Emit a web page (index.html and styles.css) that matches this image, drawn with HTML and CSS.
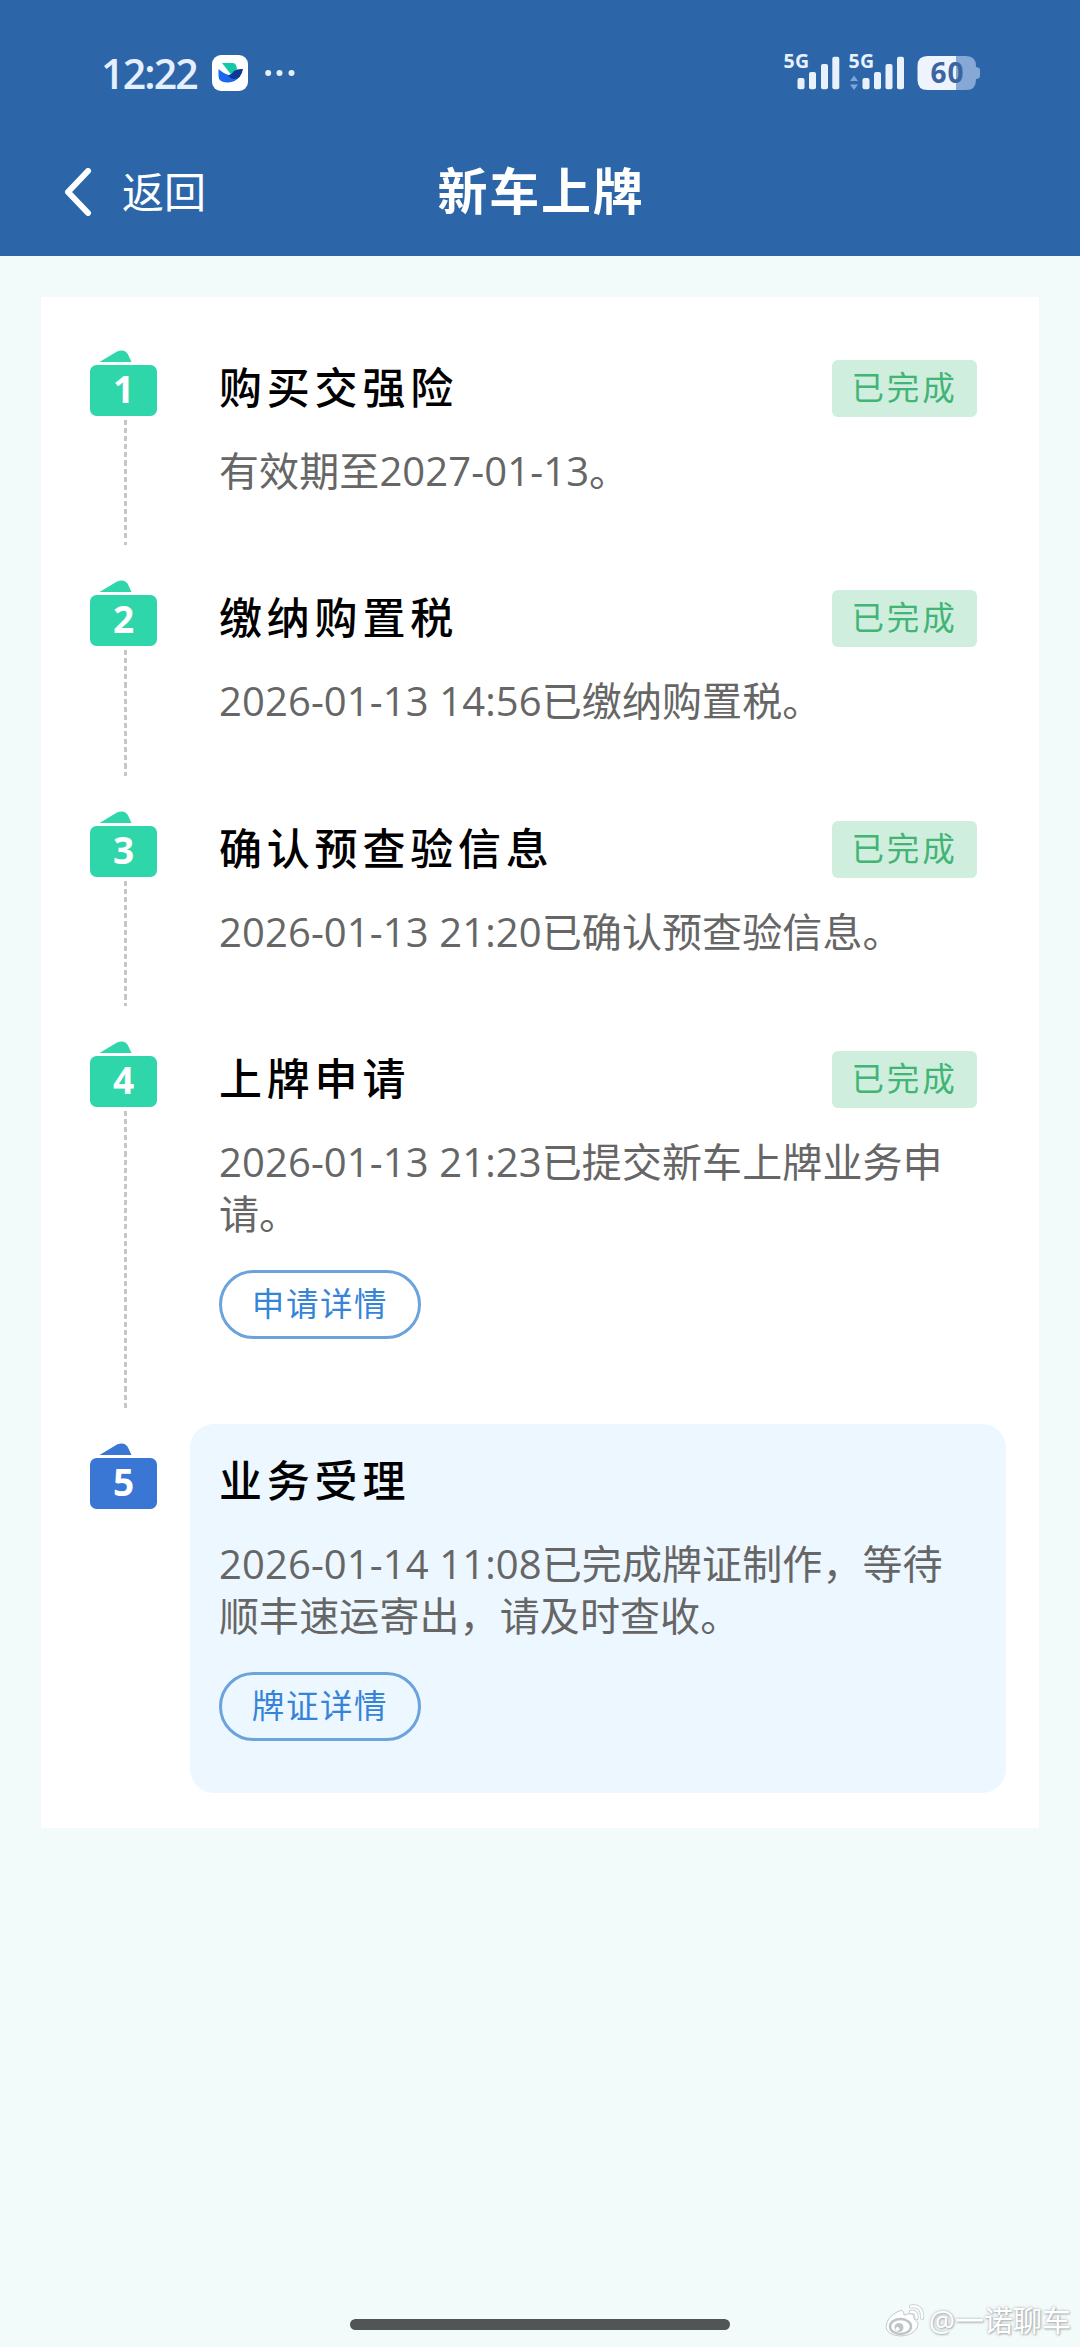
FILE: index.html
```html
<!DOCTYPE html>
<html lang="zh-CN">
<head>
    <meta charset="UTF-8">
    <meta name="viewport" content="width=device-width, initial-scale=1.0">
    <title>新车上牌</title>
    <link rel="stylesheet" href="styles.css">
</head>
<body>
    <svg class="sprite" width="0" height="0">
        <symbol id="wallet" viewBox="0 0 67 67">
            <path d="M9.5 12 L27 1.6 Q35 -2 38.5 5.5 L41.5 12 Z"/>
            <rect x="0" y="15" width="67" height="51" rx="6.500"/>
        </symbol>
    </svg>

    <div class="page">
        <header class="header">
            <div class="status-bar">
                <div class="status-left">
                    <span class="time">12:22</span>
                    <svg class="app-icon" width="36" height="36" viewBox="0 0 36 36">
                        <rect width="36" height="36" rx="9" fill="#fff"/>
                        <path d="M10 8 H21 Q24.500 8.500 25 14 L19 19.500 Z" fill="#16c8a8"/>
                        <path d="M6.500 14 Q12 19 18.500 20.500 L28 21 Q23 28 15 27.500 Q6.500 27 6.500 21 Z" fill="#1b68ee"/>
                        <path d="M31 14 Q29 25 21 24 Q18 23 16 20.500 Q20 19 22 16 Q25 13.500 31 14 Z" fill="#0b3a94"/>
                    </svg>
                    <svg class="more" width="30" height="8" viewBox="0 0 30 8">
                        <circle cx="3.200" cy="4" r="3"/>
                        <circle cx="14.500" cy="4" r="3"/>
                        <circle cx="26.500" cy="4" r="3"/>
                    </svg>
                </div>
                <svg class="status-right" width="202" height="58" viewBox="780 43 202 58">
                    <g fill="#e9f1fd">
                        <text x="783.500" y="67.500" class="net" textLength="25.500">5G</text>
                        <rect x="797.500" y="78" width="7" height="11.300" rx="2"/>
                        <rect x="809" y="72" width="7" height="17.300" rx="2"/>
                        <rect x="821" y="64" width="7" height="25.300" rx="2"/>
                        <rect x="832.300" y="56.700" width="7" height="32.600" rx="2"/>
                        <text x="848.500" y="67.500" class="net" textLength="25.500">5G</text>
                        <rect x="862.500" y="78" width="7" height="11.300" rx="2"/>
                        <rect x="874" y="72" width="7" height="17.300" rx="2"/>
                        <rect x="885.500" y="64" width="7" height="25.300" rx="2"/>
                        <rect x="897" y="56.700" width="7" height="32.600" rx="2"/>
                    </g>
                    <path d="M850 81 L854 75.500 L858 81 Z M850 84.500 L854 90 L858 84.500 Z" fill="#7fa6d8"/>
                    <path d="M956 56 H966 Q976 56 976 66 V67 Q980 67.500 980 70 V76 Q980 78.500 976 79 V80 Q976 90 966 90 H956 Z" fill="#86a8d4"/>
                    <path d="M956 56 H927.500 Q917.500 56 917.500 66 V80 Q917.500 90 927.500 90 H956 Z" fill="#eef4fd"/>
                    <text x="930.500" y="83" class="battery" textLength="33">60</text>
                </svg>
            </div>
            <div class="nav-bar">
                <a class="back">
                    <svg width="28" height="48" viewBox="0 0 28 48">
                        <path d="M24 3 L4 24 L24 45"/>
                    </svg>
                    <span>返回</span>
                </a>
                <h1>新车上牌</h1>
            </div>
        </header>

        <main class="card">
            <section class="step">
                <div class="step-side">
                    <div class="step-icon"><svg><use href="#wallet"/></svg><span>1</span></div>
                    <div class="step-line"></div>
                </div>
                <div class="step-body">
                    <div class="step-head">
                        <h2>购买交强险</h2>
                        <span class="badge">已完成</span>
                    </div>
                    <p>有效期至2027-01-13。</p>
                </div>
            </section>

            <section class="step">
                <div class="step-side">
                    <div class="step-icon"><svg><use href="#wallet"/></svg><span>2</span></div>
                    <div class="step-line"></div>
                </div>
                <div class="step-body">
                    <div class="step-head">
                        <h2>缴纳购置税</h2>
                        <span class="badge">已完成</span>
                    </div>
                    <p>2026-01-13 14:56已缴纳购置税。</p>
                </div>
            </section>

            <section class="step">
                <div class="step-side">
                    <div class="step-icon"><svg><use href="#wallet"/></svg><span>3</span></div>
                    <div class="step-line"></div>
                </div>
                <div class="step-body">
                    <div class="step-head">
                        <h2>确认预查验信息</h2>
                        <span class="badge">已完成</span>
                    </div>
                    <p>2026-01-13 21:20已确认预查验信息。</p>
                </div>
            </section>

            <section class="step step-with-btn">
                <div class="step-side">
                    <div class="step-icon"><svg><use href="#wallet"/></svg><span>4</span></div>
                    <div class="step-line"></div>
                </div>
                <div class="step-body">
                    <div class="step-head">
                        <h2>上牌申请</h2>
                        <span class="badge">已完成</span>
                    </div>
                    <p>2026-01-13 21:23已提交新车上牌业务申请。</p>
                    <button type="button">申请详情</button>
                </div>
            </section>

            <section class="step current">
                <div class="step-side">
                    <div class="step-icon"><svg><use href="#wallet"/></svg><span>5</span></div>
                </div>
                <div class="step-body">
                    <div class="step-head">
                        <h2>业务受理</h2>
                    </div>
                    <p>2026-01-14 11:08已完成牌证制作，等待顺丰速运寄出，请及时查收。</p>
                    <button type="button">牌证详情</button>
                </div>
            </section>
        </main>

        <div class="home-bar"></div>

        <div class="watermark">
            <svg width="40" height="34" viewBox="0 0 40 34">
                <path d="M1 23 Q2 13 12 8 Q19 4 19 11 Q30 7 29 15 Q35 18 32 24 Q27 32 15 32 Q2 31 1 23 Z" fill="#fff" stroke="#c3c9ca"/>
                <ellipse cx="15.500" cy="22.500" rx="10.500" ry="7.500" fill="#fff" stroke="#bfc5c6" stroke-width="2.500"/>
                <circle cx="14" cy="23.500" r="4.500" fill="#bfc5c6"/>
                <circle cx="12.500" cy="25" r="2" fill="#fff"/>
                <path d="M26 8 Q32 7 31.500 14 M26 2.500 Q38 1 37 14" fill="none" stroke="#c3c9ca" stroke-width="4" stroke-linecap="round"/>
                <path d="M26 8 Q32 7 31.500 14 M26 2.500 Q38 1 37 14" fill="none" stroke="#fff" stroke-width="2.500" stroke-linecap="round"/>
            </svg>
            <span>@一诺聊车</span>
        </div>
    </div>
</body>
</html>
```
FILE: styles.css
```css
* {
    box-sizing: border-box;
}

body {
    margin: 0;
    font-family: "Open Sans", "Noto Sans CJK SC", sans-serif;
    background-color: #f3fafa;
}

h1, h2, p {
    margin: 0;
}

.sprite {
    display: block;
}

.page {
    position: relative;
    display: flex;
    flex-direction: column;
    height: 2347px;
}

/* header */
.header {
    height: 256px;
    background-color: #2c66a9;
    flex-shrink: 0;
}

.status-bar {
    display: flex;
    justify-content: space-between;
    align-items: center;
    height: 146px;
    padding: 0 98px 0 101px;
}

.status-left {
    display: flex;
    align-items: center;
}

.time {
    width: 111px;
    font-size: 41px;
    font-weight: 600;
    line-height: 46px;
    letter-spacing: -1.8px;
    color: #e6efff;
}

.more {
    margin-left: 17px;
    fill: #e6efff;
}

.status-right {
    margin-bottom: 2px;
}

.net {
    font-size: 19.5px;
    font-weight: 700;
}

.battery {
    font-size: 28px;
    font-weight: 700;
    fill: #3a659f;
}

.nav-bar {
    display: grid;
    grid-template-columns: 1fr auto 1fr;
    align-items: center;
    height: 92px;
    padding: 0 62px 0 64px;
}

.back {
    display: flex;
    align-items: center;
    gap: 30px;
    color: #fff;
    font-size: 42px;
    line-height: 60px;
}

.back path {
    fill: none;
    stroke: #fff;
    stroke-width: 6;
    stroke-linecap: round;
    stroke-linejoin: round;
}

.nav-bar h1 {
    padding-bottom: 2px;
    color: #fff;
    font-size: 50px;
    font-weight: 700;
    line-height: 70px;
    letter-spacing: 1.8px;
}

/* steps */
.card {
    margin: 41px 41px 0;
    padding: 34px 33px 35px 49px;
    background-color: #fff;
}

.step {
    display: flex;
    min-height: 230.3px;
}

.step-side {
    display: flex;
    flex-direction: column;
    width: 100px;
    padding: 19px 0 16px;
    flex-shrink: 0;
}

.step-icon {
    display: grid;
    width: 67px;
    height: 67px;
    color: #fff;
    fill: #2fd6a9;
}

.step-icon svg,
.step-icon span {
    grid-area: 1 / 1;
}

.step-icon svg {
    width: 67px;
    height: 67px;
}

.step-icon span {
    padding-top: 15px;
    font-size: 37px;
    font-weight: 700;
    line-height: 48px;
    text-align: center;
}

.step-line {
    flex: 1;
    width: 3px;
    margin-left: 34px;
    background: repeating-linear-gradient(#fff 0 3px, #c6c6c6 3px 8.1px);
}

.step-body {
    flex: 1;
    padding: 29px 29px 63px;
}

.step-head {
    display: flex;
    justify-content: space-between;
    align-items: center;
    height: 57px;
}

.step-head h2 {
    padding-bottom: 2px;
    font-size: 43px;
    font-weight: 500;
    line-height: 57px;
    letter-spacing: 4.8px;
    color: #000;
}

.badge {
    width: 145px;
    height: 57px;
    border-radius: 6px;
    background-color: #cfeedd;
    color: #41b476;
    font-size: 32.5px;
    line-height: 56px;
    letter-spacing: 2.8px;
    text-align: center;
}

.step-body p {
    margin-top: 28px;
    font-size: 40px;
    line-height: 52px;
    letter-spacing: 0.1px;
    color: #666;
}

.step-body button {
    display: block;
    width: 202px;
    height: 69px;
    margin-top: 30px;
    padding: 0;
    border: 3px solid #6ba3dd;
    border-radius: 35px;
    background: none;
    color: #3684d8;
    font-family: inherit;
    font-size: 32.5px;
    line-height: 60px;
    letter-spacing: 1.6px;
}

.step-with-btn .step-body {
    padding-bottom: 85px;
}

.current .step-body {
    padding-bottom: 52px;
    border-radius: 24px;
    background-color: #edf7ff;
}

.current .step-icon {
    fill: #3a76d4;
}

/* bottom */
.home-bar {
    width: 380px;
    height: 11px;
    margin: auto auto 17px;
    border-radius: 6px;
    background-color: #525556;
}

.watermark {
    position: absolute;
    right: 9px;
    bottom: 6px;
    display: flex;
    align-items: center;
    gap: 4px;
    color: #fff;
    font-size: 29px;
    line-height: 40px;
    text-shadow: 0 0 3px #a3a9aa, 1px 1px 2px #b0b6b7;
}
```
